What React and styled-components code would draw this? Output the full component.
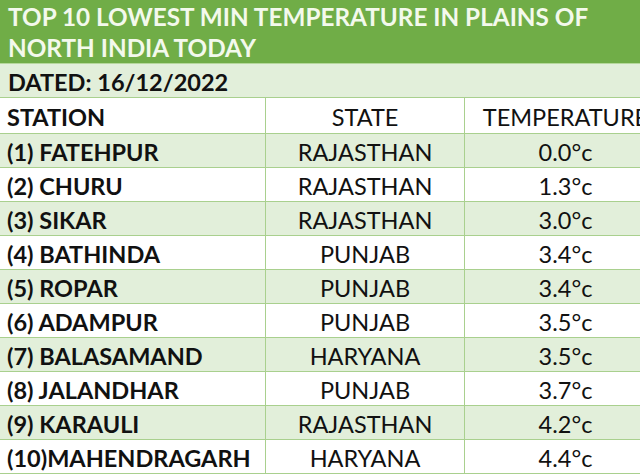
import styled, { createGlobalStyle } from 'styled-components';

const rows = [
    { station : '(1) FATEHPUR', state : 'RAJASTHAN', temp : '0.0°c' },
    { station : '(2) CHURU', state : 'RAJASTHAN', temp : '1.3°c' },
    { station : '(3) SIKAR', state : 'RAJASTHAN', temp : '3.0°c' },
    { station : '(4) BATHINDA', state : 'PUNJAB', temp : '3.4°c' },
    { station : '(5) ROPAR', state : 'PUNJAB', temp : '3.4°c' },
    { station : '(6) ADAMPUR', state : 'PUNJAB', temp : '3.5°c' },
    { station : '(7) BALASAMAND', state : 'HARYANA', temp : '3.5°c' },
    { station : '(8) JALANDHAR', state : 'PUNJAB', temp : '3.7°c' },
    { station : '(9) KARAULI', state : 'RAJASTHAN', temp : '4.2°c' },
    { station : '(10)MAHENDRAGARH', state : 'HARYANA', temp : '4.4°c' },
];

const App = () => {
    return (
        <>
            <GlobalStyle />
            <SheetStyled>
                <TitleStyled>
                    TOP 10 LOWEST MIN TEMPERATURE IN PLAINS OF<br />
                    NORTH INDIA TODAY
                </TitleStyled>
                <DatedStyled>DATED: 16/12/2022</DatedStyled>
                <RowStyled $head>
                    <StationCell>STATION</StationCell>
                    <CenterCell>STATE</CenterCell>
                    <CenterCell>TEMPERATURE</CenterCell>
                </RowStyled>
                {rows.map(({ station, state, temp }, i) => (
                    <RowStyled key={ station } $shaded={ i % 2 === 0 }>
                        <StationCell>{ station }</StationCell>
                        <CenterCell>{ state }</CenterCell>
                        <CenterCell>{ temp }</CenterCell>
                    </RowStyled>
                ))}
            </SheetStyled>
        </>
    );
};

const GlobalStyle = createGlobalStyle`
    html, body {
        margin : 0;
        padding : 0;
        width : 640px;
        height : 475px;
        overflow : hidden;
        background : #ffffff;
    }
    body {
        font-family : Lato, "Open Sans", sans-serif;
        color : #111111;
    }
`;

const SheetStyled = styled.div`
    width : 666px;
    display : flex;
    flex-direction : column;
`;

const TitleStyled = styled.div`
    background-color : #70ad47;
    color : #f3f9ec;
    font-size : 24.3px;
    font-weight : 700;
    line-height : 31px;
    padding : 1px 0 2px 8px;
    height : 64px;
    box-sizing : border-box;
    border-bottom : 1px solid #b5d89c;
`;

const DatedStyled = styled.div`
    background-color : #e2efda;
    font-size : 23.5px;
    font-weight : 700;
    height : 29px;
    line-height : 29px;
    padding : 4px 0 0 8px;
    border-bottom : 1px solid #a9d08e;
`;

const RowStyled = styled.div`
    display : grid;
    grid-template-columns : 266px 199px 201px;
    height : ${({ $head }) => $head ? '36px' : '34px'};
    box-sizing : border-box;
    background-color : ${({ $shaded }) => $shaded ? '#e2efda' : '#ffffff'};
    border-bottom : 1px solid #a9d08e;
    font-size : 23.5px;
    line-height : ${({ $head }) => $head ? '31px' : '29px'};

    & > * {
        padding-top : 4px;
    }

    & > :not(:last-child) {
        border-right : 1px solid #a9d08e;
    }
`;

const StationCell = styled.div`
    font-weight : 700;
    padding-left : 7px;
    white-space : nowrap;
`;

const CenterCell = styled.div`
    text-align : center;
    white-space : nowrap;
`;

export default App;
